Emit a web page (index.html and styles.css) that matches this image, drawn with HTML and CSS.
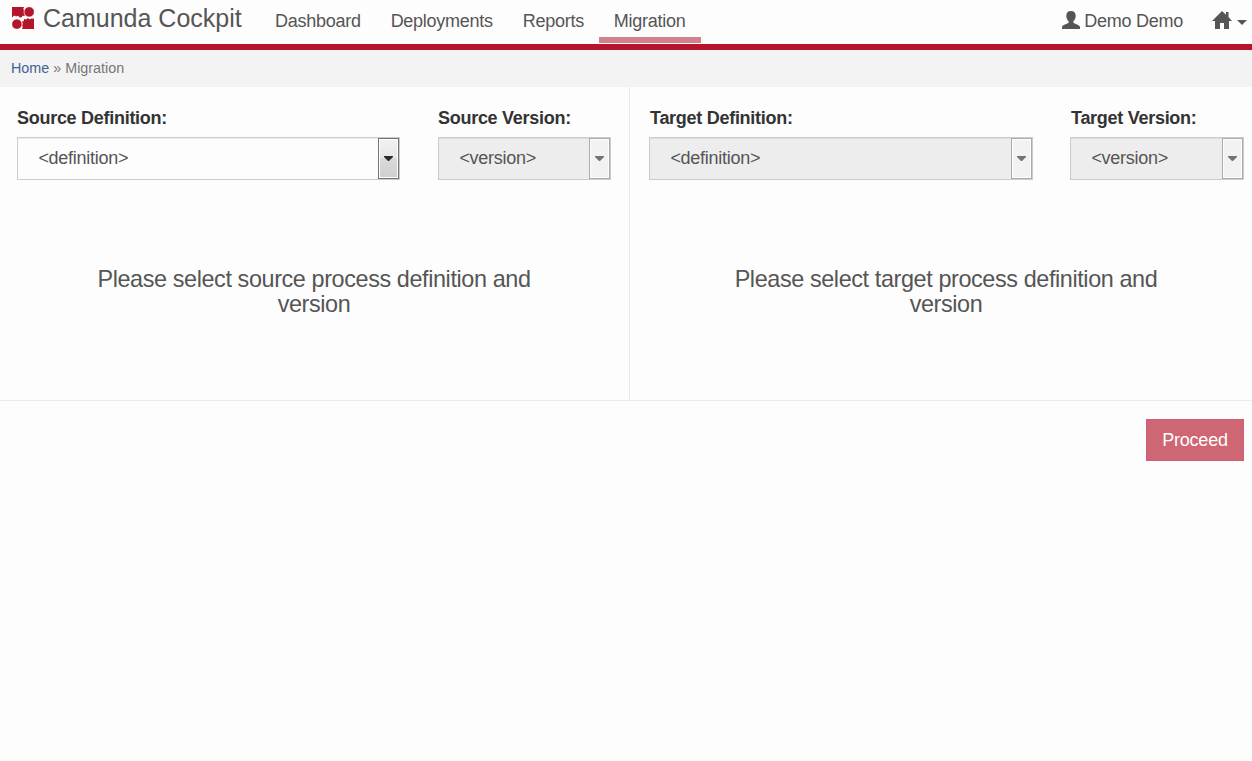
FILE: index.html
```html
<!DOCTYPE html>
<html lang="en">
<head>
<meta charset="utf-8">
<title>Camunda Cockpit</title>
<link rel="stylesheet" href="styles.css">
</head>
<body>
<header class="topbar">
  <div class="brand">
    <svg class="logo" viewBox="0 0 22 22" aria-hidden="true">
      <path class="red" d="M0 0h12l-.8 2.200 1.500 1-.3 2.500 1.100 1.500-1.200 1.800-1.700-.3-1.200 1.900-1.600-.2-1.800-1.600-2 .6-1.700-.8L0 10.500zM22 22H10l.8-2-1-1.500.9-1.800-.8-2 1.900-.8.200-1.900 2.300.4 1.400-1.400 1.900 1.200 2-.7 2.400.2z"/>
      <circle class="red ring" cx="17.200" cy="4.900" r="5.200"/>
      <circle class="red ring" cx="4.900" cy="17.100" r="5.200"/>
    </svg>
    <span>Camunda Cockpit</span>
  </div>
  <nav class="nav">
    <a>Dashboard</a><a>Deployments</a><a>Reports</a><a class="active">Migration</a>
  </nav>
  <div class="account">
    <svg class="user" viewBox="0 0 18 18" aria-hidden="true"><path d="M9 0c3 0 4.700 1.700 4.700 4.700 0 2.700-1 4.200-2.300 5.400v1.700c1.300 1.200 6.200 2 6.600 4.200v2H0v-2c.4-2.200 5.300-3 6.600-4.200v-1.700C5.300 8.900 4.300 7.400 4.300 4.700 4.300 1.700 6 0 9 0z"/></svg>
    <span>Demo Demo</span>
    <svg class="home" viewBox="0 0 20 18" aria-hidden="true"><path d="M10 0l4 3.700V1h2.500v5L20 10h-3v8h-5v-6H8v6H3v-8H0z"/></svg>
    <svg class="caret" viewBox="0 0 10 5" aria-hidden="true"><path d="M0 0h10L5 5z"/></svg>
  </div>
</header>
<div class="crumbs"><a>Home</a> » Migration</div>
<main class="panes">
  <section class="pane source">
    <div class="fields">
      <div class="field"><label>Source Definition:</label>
        <div class="select"><span>&lt;definition&gt;</span><i class="drop"><svg viewBox="0 0 9 5"><path d="M0 0h9v1L5 5H4L0 1z"/></svg></i></div></div>
      <div class="field"><label>Source Version:</label>
        <div class="select disabled"><span>&lt;version&gt;</span><i class="drop"><svg viewBox="0 0 9 5"><path d="M0 0h9v1L5 5H4L0 1z"/></svg></i></div></div>
    </div>
    <p class="hint">Please select source process definition and<br>version</p>
  </section>
  <section class="pane target">
    <div class="fields">
      <div class="field"><label>Target Definition:</label>
        <div class="select disabled"><span>&lt;definition&gt;</span><i class="drop"><svg viewBox="0 0 9 5"><path d="M0 0h9v1L5 5H4L0 1z"/></svg></i></div></div>
      <div class="field"><label>Target Version:</label>
        <div class="select disabled"><span>&lt;version&gt;</span><i class="drop"><svg viewBox="0 0 9 5"><path d="M0 0h9v1L5 5H4L0 1z"/></svg></i></div></div>
    </div>
    <p class="hint">Please select target process definition and<br>version</p>
  </section>
</main>
<footer class="actions"><button class="proceed">Proceed</button></footer>
</body>
</html>
```
FILE: styles.css
```css
* { box-sizing: border-box; }
body {
  margin: 0;
  min-height: 100vh;
  background: #fdfdfd;
  color: #555;
  font: 18px/25px "Liberation Sans", Arial, sans-serif;
  letter-spacing: -.24px;
  overflow: hidden;
}
.topbar {
  display: flex;
  height: 50px;
  border-bottom: 6px solid #b5152b;
}
.brand {
  display: flex;
  align-items: flex-start;
  gap: 9px;
  width: 260px;
  padding: 6px 0 0 12px;
  font-size: 25px;
  letter-spacing: 0;
  line-height: 24px;
  white-space: nowrap;
}
.logo { width: 22px; height: 22px; margin-top: 1px; }
.red { fill: #b5152b; }
.ring { stroke: #fdfdfd; stroke-width: .7; }
.nav { display: flex; height: 43px; letter-spacing: -.27px; }
.nav a {
  padding: 9px 15px 0;
  border-bottom: 6px solid transparent;
}
.nav .active { width: 102px; border-bottom-color: #d2808c; }
.account {
  display: flex;
  align-items: flex-start;
  margin-left: auto;
  padding: 9px 5px 0 0;
}
.account svg { fill: #555; }
.user { width: 18px; height: 18px; margin: 2px 4px 0 0; }
.home { width: 20px; height: 18px; margin: 2px 5px 0 29px; }
.caret { width: 10px; height: 5px; margin-top: 11px; }
.crumbs {
  height: 37px;
  padding: 6px 11px 0;
  background: #f3f3f3;
  color: #777;
  font-size: 14.35px;
  letter-spacing: 0;
}
.crumbs a { color: #446195; }
.panes {
  display: grid;
  grid-template-columns: 630px 1fr;
  height: 314px;
  border-bottom: 1px solid #ebebeb;
}
.pane { padding: 18px 0 0 17px; }
.source { border-right: 1px solid #ebebeb; }
.target { padding-left: 19px; }
.fields {
  display: grid;
  grid-template-columns: 383px 173px;
  gap: 38px;
}
.target .fields { grid-template-columns: 384px 174px; gap: 37px; }
.field label {
  display: block;
  height: 32px;
  padding-top: 1px;
  color: #333;
  font-weight: bold;
  letter-spacing: -.28px;
}
.target label { padding-left: 1px; }
.select {
  display: flex;
  justify-content: space-between;
  height: 43px;
  border: 1px solid #ccc;
  box-shadow: inset 0 1px 1px rgba(0, 0, 0, .075);
}
.select span { padding: 8px 0 0 20.4px; letter-spacing: -.28px; }
.disabled { background: #ededed; }
.drop {
  display: flex;
  align-items: center;
  justify-content: center;
  width: 21px;
  border: 1px solid #787071;
  box-shadow: inset 0 0 0 1px #fdfdfd;
  background: linear-gradient(#f1f1f1, #e7e7e7 49%, #dadada 50%, #cfcfcf);
}
.drop svg { width: 9px; height: 5px; fill: #302c2d; }
.disabled .drop { border-color: #aeaaab; background: #f2f2f2; }
.disabled .drop svg { fill: #7a7071; }
.hint {
  width: 594px;
  margin: 87px 0 0;
  text-align: center;
  font-size: 23.4px;
  letter-spacing: -.39px;
}
.actions {
  display: flex;
  justify-content: flex-end;
  padding: 18px 8px 0 0;
}
.proceed {
  width: 98px;
  height: 42px;
  padding: 0;
  border: 1px solid #cb6070;
  background: #ce6674;
  color: #fff;
  font: inherit;
  letter-spacing: -.24px;
}
```
